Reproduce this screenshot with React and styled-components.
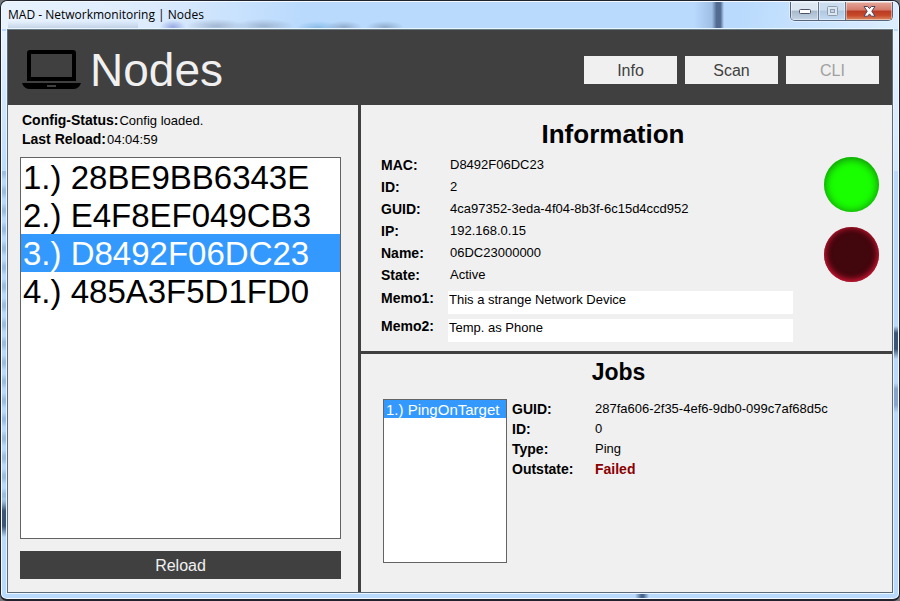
import React, { useState } from "react";
import styled, { createGlobalStyle, css } from "styled-components";

const GlobalStyle = createGlobalStyle`
  *, *::before, *::after { box-sizing: border-box; }
  body {
    margin: 0;
    background: #77777b;
    font-family: "Liberation Sans", Arial, sans-serif;
    font-size: 13px;
    color: #000;
  }
  h1, h2, dl, dd, dt, p { margin: 0; }
  button, input { font-family: inherit; border-radius: 0; }
`;

const Window = styled.div`
  display: flex;
  flex-direction: column;
  min-height: 100vh;
  padding: 0 6px 6px;
  border: 1px solid #20232d;
  border-bottom-width: 2px;
  border-radius: 7px;
  box-shadow: inset 0 0 0 1px #f4faff;
  background:
    linear-gradient(#b9dafd00 0 325px, #3c5578 332px 348px, #b9dafd00 358px 382px, #86a5cb 388px 404px, #b9dafd00 412px) right / 8px 100% no-repeat,
    linear-gradient(#b9dafd00 0 498px, #3c5578 510px 525px, #b9dafd00 536px) left / 8px 100% no-repeat,
    repeating-linear-gradient(#7f9fc880 0 3px, #b9dafd00 9px 13px, #7f9fc880 19px) left 170px / 8px 340px no-repeat,
    linear-gradient(#e7f2fe, #e7f2fe00) left 30px / 8px 150px no-repeat,
    linear-gradient(#e7f2fe, #d3e8fe) right 30px / 8px 140px no-repeat,
    linear-gradient(90deg, #b9dafd00, #49658d 45% 60%, #b9dafd00) 634px bottom / 14px 8px no-repeat,
    #b9dafd;
`;

const TitleBar = styled.header`
  display: flex;
  justify-content: space-between;
  align-items: flex-start;
  height: 28px;
  margin: 0 -5px;
  padding: 0 5px 0 6px;
  border-top: 1px solid #f4faff;
  border-radius: 6px 6px 0 0;
  background:
    radial-gradient(closest-side, #7289a890, #7289a800) 324px 19px / 36px 12px no-repeat,
    radial-gradient(closest-side, #7289a890, #7289a800) 364px 19px / 38px 12px no-repeat,
    radial-gradient(closest-side, #579cd080, #579cd000) 294px 19px / 44px 14px no-repeat,
    radial-gradient(closest-side, #8295b090, #8295b000) 184px 17px / 60px 14px no-repeat,
    radial-gradient(closest-side, #8295b090, #8295b000) 232px 17px / 60px 14px no-repeat,
    radial-gradient(closest-side, #6678d090, #6678d000) 158px 18px / 26px 14px no-repeat,
    linear-gradient(#a4b7ce00, #a4b7cea0) 6px 19px / 130px 9px no-repeat,
    linear-gradient(90deg, #8fafd500, #8fafd5a0 60%, #536b91 75% 88%, #8fafd500) 692px 0 / 30px 28px no-repeat,
    linear-gradient(100deg, #e9f3fe 0, #dcebfd 150px, #b9dafd 300px, #b9dafd 82%, #dcedff 100%);
`;

const WindowTitle = styled.div`
  padding-top: 5px;
  font: 12px/16px "Open Sans", "Noto Sans", sans-serif;
`;

const WindowControls = styled.div`
  display: flex;
  height: 19px;
  border: 1px solid #55647d;
  border-top: 0;
  border-radius: 0 0 5px 5px;
  overflow: hidden;
  box-shadow: 0 0 0 1px #e8f4ffb0;
`;

const tones = {
  plain: "linear-gradient(#dde7f2 0 45%, #a9b9cc 50%, #c4d5e8)",
  faded: "linear-gradient(#cbdcef 0 45%, #b1c8e1 50%, #c3daf2)",
  close: "linear-gradient(#e5a99b 0, #d4796a 45%, #b93a23 50%, #c64a2b 75%, #dc8b65)",
};

const ControlButton = styled.button`
  display: grid;
  place-items: center;
  width: ${(p) => (p.$tone === "close" ? 47 : 27)}px;
  padding: 0;
  border: 0;
  box-shadow: inset 0 0 0 1px #ffffff70;
  background: ${(p) => tones[p.$tone]};
  & + & { border-left: 1px solid #66758c; }
`;

const Client = styled.main`
  flex: 1;
  display: flex;
  flex-direction: column;
  border: 1px solid #5c6a7b;
  border-top-color: #6a7a84;
  box-shadow: 0 0 0 1px #e9f5ff;
  background: #f0f0f0;
`;

const Banner = styled.div`
  display: flex;
  align-items: center;
  height: 75px;
  padding: 0 13px 0 14px;
  background: #404040;
`;

const Heading = styled.h1`
  flex: 1;
  padding: 5px 0 0 8px;
  font-size: 46px;
  line-height: 54px;
  font-weight: 400;
  color: #f0f0f0;
`;

const Actions = styled.nav`
  display: flex;
  gap: 8px;
  padding-top: 5px;
`;

const FlatButton = styled.button`
  height: 28px;
  width: ${(p) => (p.$wide ? "100%" : "93px")};
  padding: 1px 0 0;
  border: 0;
  font-size: 16px;
  line-height: 27px;
  background: ${(p) => (p.$wide ? "#404040" : "#f0f0f0")};
  color: ${(p) => (p.$wide ? "#f0f0f0" : "#404040")};
  &:disabled { color: #a0a0a0; }
`;

const Columns = styled.div`
  flex: 1;
  display: grid;
  grid-template-columns: minmax(300px, 353fr) minmax(400px, 531fr);
`;

const Sidebar = styled.section`
  display: flex;
  flex-direction: column;
  gap: 12px;
  padding: 6px 17px 13px 12px;
  border-right: 3px solid #404040;
`;

const Status = styled.dl`
  padding-left: 2px;
  margin-bottom: -4px;
`;

const StatusLine = styled.div`
  display: flex;
  gap: 1px;
  line-height: 19px;
`;

const Label = styled.dt`
  font-size: 14px;
  font-weight: 700;
`;

const FieldLabel = styled.label`
  font-size: 14px;
  font-weight: 700;
`;

const ListBox = styled.div`
  flex: ${(p) => (p.$large ? "1" : "none")};
  height: ${(p) => (p.$large ? "auto" : "164px")};
  border: 1px solid #646464;
  background: #fff;
`;

const Option = styled.button`
  display: block;
  width: 100%;
  border: 0;
  text-align: left;
  white-space: nowrap;
  ${(p) =>
    p.$large
      ? css`
          padding: 1px 2px 0;
          font-size: 33px;
          line-height: 37px;
        `
      : css`
          padding: 1px 2px 0;
          font-size: 15px;
          line-height: 17px;
        `}
  color: ${(p) => (p["aria-selected"] ? "#fff" : "#000")};
  background: ${(p) => (p["aria-selected"] ? "#3399ff" : "#fff")};
`;

const Details = styled.div`
  display: flex;
  flex-direction: column;
`;

const Information = styled.section`
  padding: 13px 13px 9px 20px;
  border-bottom: 3px solid #404040;
`;

const Jobs = styled.section`
  flex: 1;
  padding: 4px 13px 12px 22px;
`;

const JobList = styled.div`
  flex: none;
  width: 124px;
`;

const SectionTitle = styled.h2`
  text-align: center;
  font-size: ${(p) => (p.$small ? 23 : 26)}px;
  line-height: ${(p) => (p.$small ? 28 : 32)}px;
  padding-right: ${(p) => (p.$small ? 25 : 34)}px;
`;

const Split = styled.div`
  display: flex;
  align-items: flex-start;
  gap: ${(p) => p.$gap}px;
  padding-top: ${(p) => p.$top}px;
`;

const Fields = styled.div`
  flex: 1;
  min-width: 0;
`;

const Facts = styled.dl`
  display: grid;
  grid-template-columns: ${(p) => p.$label}px 1fr;
  grid-auto-rows: ${(p) => p.$row}px;
  line-height: ${(p) => p.$row}px;
`;

const Value = styled.dd`
  padding-left: 2px;
  ${(p) =>
    p.$failed &&
    css`
      color: #8b0000;
      font-size: 14px;
      font-weight: 700;
    `}
`;

const Memos = styled.div`
  display: grid;
  grid-template-columns: 67px 1fr;
  row-gap: 5px;
  padding-top: 5px;
  line-height: 14px;
`;

const MemoInput = styled.input`
  width: 100%;
  min-width: 0;
  height: 23px;
  padding: 0 1px 6px;
  border: 0;
  background: #fff;
  font-size: 13px;
  color: #000;
`;

const Lamps = styled.div`
  display: grid;
  gap: 15px;
  padding-top: 3px;
`;

const Lamp = styled.div`
  width: 55px;
  height: 55px;
  border-radius: 50%;
  ${(p) =>
    p.$on
      ? css`
          background: #19ff00;
          box-shadow: inset 0 1px 9px 1px #128a0c;
        `
      : css`
          background: #42060d;
          box-shadow: inset 0 -1px 6px 1px #e8183a;
        `}
`;

const LaptopIcon = styled.svg`
  flex: none;
  margin-top: 4px;
`;

function Laptop() {
  return (
    <LaptopIcon width="60" height="40" viewBox="0 0 60 40" aria-hidden="true">
      <path
        fillRule="evenodd"
        d="M8 0H51Q54 0 54 3V31H5V3Q5 0 8 0ZM9 4V27H50V4Z"
        fill="#000"
      />
      <path d="M0 33H59Q57 39 51 39H8Q2 39 0 33Z" fill="#000" />
      <rect x="25" y="35" width="9" height="2" fill="#404040" />
    </LaptopIcon>
  );
}

function List({ label, items, initial, large }) {
  const [selected, setSelected] = useState(initial);
  return (
    <ListBox role="listbox" aria-label={label} $large={large}>
      {items.map((item, i) => (
        <Option
          key={item}
          type="button"
          role="option"
          aria-selected={i === selected}
          $large={large}
          onClick={() => setSelected(i)}
        >
          {i + 1}.) {item}
        </Option>
      ))}
    </ListBox>
  );
}

const nodes = ["28BE9BB6343E", "E4F8EF049CB3", "D8492F06DC23", "485A3F5D1FD0"];

const facts = [
  ["MAC:", "D8492F06DC23"],
  ["ID:", "2"],
  ["GUID:", "4ca97352-3eda-4f04-8b3f-6c15d4ccd952"],
  ["IP:", "192.168.0.15"],
  ["Name:", "06DC23000000"],
  ["State:", "Active"],
];

const jobFacts = [
  ["GUID:", "287fa606-2f35-4ef6-9db0-099c7af68d5c"],
  ["ID:", "0"],
  ["Type:", "Ping"],
  ["Outstate:", "Failed"],
];

export default function App() {
  return (
    <>
      <GlobalStyle />
      <Window>
        <TitleBar>
          <WindowTitle>MAD - Networkmonitoring | Nodes</WindowTitle>
          <WindowControls>
            <ControlButton $tone="plain" aria-label="Minimize">
              <svg width="14" height="6" viewBox="0 0 14 6">
                <rect x="1.5" y="1.5" width="11" height="4" rx="1" fill="#fff" stroke="#4d5264" />
              </svg>
            </ControlButton>
            <ControlButton $tone="faded" aria-label="Maximize" disabled>
              <svg width="13" height="11" viewBox="0 0 13 11">
                <rect x="1.5" y="0.5" width="10" height="9" rx="1" fill="#dbe6f1" stroke="#8d9caf" />
                <rect x="4.5" y="3.5" width="4" height="3" fill="#c3d4e6" stroke="#8d9caf" />
              </svg>
            </ControlButton>
            <ControlButton $tone="close" aria-label="Close">
              <svg width="13" height="11" viewBox="0 0 13 11">
                <path
                  d="M1 .5H4.6L6.5 2.6 8.4 .5H12L8.8 5.2 12 10.2H8.4L6.5 7.9 4.6 10.2H1L4.2 5.2Z"
                  fill="#fff"
                  stroke="#50445a"
                />
              </svg>
            </ControlButton>
          </WindowControls>
        </TitleBar>
        <Client>
          <Banner>
            <Laptop />
            <Heading>Nodes</Heading>
            <Actions>
              <FlatButton>Info</FlatButton>
              <FlatButton>Scan</FlatButton>
              <FlatButton disabled>CLI</FlatButton>
            </Actions>
          </Banner>
          <Columns>
            <Sidebar>
              <Status>
                <StatusLine>
                  <Label>Config-Status:</Label>
                  <dd>Config loaded.</dd>
                </StatusLine>
                <StatusLine>
                  <Label>Last Reload:</Label>
                  <dd>04:04:59</dd>
                </StatusLine>
              </Status>
              <List label="Nodes" items={nodes} initial={2} large />
              <FlatButton $wide>Reload</FlatButton>
            </Sidebar>
            <Details>
              <Information>
                <SectionTitle>Information</SectionTitle>
                <Split $gap={31} $top={4}>
                  <Fields>
                    <Facts $label={67} $row={22}>
                      {facts.map(([k, v]) => (
                        <React.Fragment key={k}>
                          <Label>{k}</Label>
                          <Value>{v}</Value>
                        </React.Fragment>
                      ))}
                    </Facts>
                    <Memos>
                      <FieldLabel htmlFor="memo1">Memo1:</FieldLabel>
                      <MemoInput id="memo1" defaultValue="This a strange Network Device" />
                      <FieldLabel htmlFor="memo2">Memo2:</FieldLabel>
                      <MemoInput id="memo2" defaultValue="Temp. as Phone" />
                    </Memos>
                  </Fields>
                  <Lamps>
                    <Lamp $on role="img" aria-label="Online" />
                    <Lamp role="img" aria-label="Alarm off" />
                  </Lamps>
                </Split>
              </Information>
              <Jobs>
                <SectionTitle $small>Jobs</SectionTitle>
                <Split $gap={5} $top={13}>
                  <JobList>
                    <List label="Jobs" items={["PingOnTarget"]} initial={0} />
                  </JobList>
                  <Fields>
                    <Facts $label={81} $row={20}>
                      {jobFacts.map(([k, v]) => (
                        <React.Fragment key={k}>
                          <Label>{k}</Label>
                          <Value $failed={v === "Failed"}>{v}</Value>
                        </React.Fragment>
                      ))}
                    </Facts>
                  </Fields>
                </Split>
              </Jobs>
            </Details>
          </Columns>
        </Client>
      </Window>
    </>
  );
}
